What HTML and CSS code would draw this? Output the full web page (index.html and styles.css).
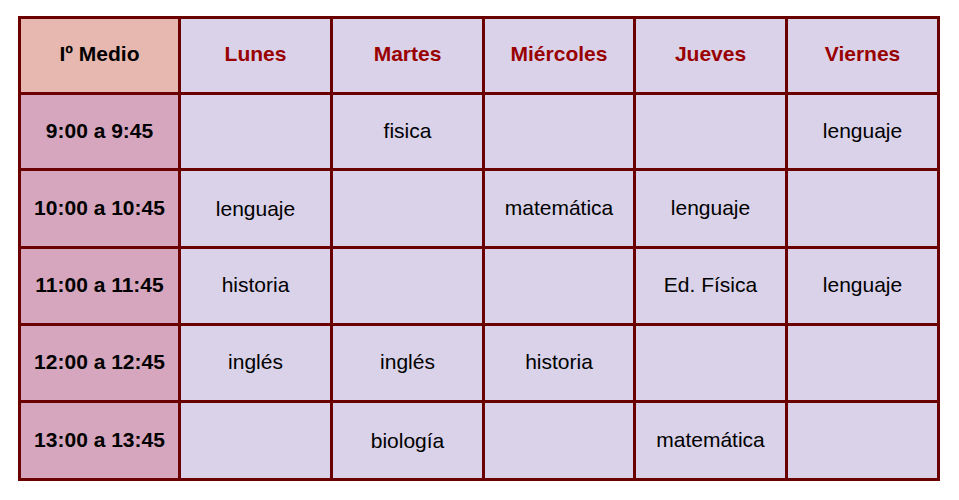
FILE: index.html
```html
<!DOCTYPE html>
<html lang="es">
<head>
<meta charset="utf-8">
<title>Horario Iº Medio</title>
<link rel="stylesheet" href="styles.css">
</head>
<body>
<div class="schedule">
  <div class="cell corner">Iº Medio</div>
  <div class="cell day">Lunes</div>
  <div class="cell day">Martes</div>
  <div class="cell day">Miércoles</div>
  <div class="cell day">Jueves</div>
  <div class="cell day">Viernes</div>

  <div class="cell time">9:00 a 9:45</div>
  <div class="cell"></div>
  <div class="cell">fisica</div>
  <div class="cell"></div>
  <div class="cell"></div>
  <div class="cell">lenguaje</div>

  <div class="cell time">10:00 a 10:45</div>
  <div class="cell low">lenguaje</div>
  <div class="cell"></div>
  <div class="cell">matemática</div>
  <div class="cell">lenguaje</div>
  <div class="cell"></div>

  <div class="cell time">11:00 a 11:45</div>
  <div class="cell">historia</div>
  <div class="cell"></div>
  <div class="cell"></div>
  <div class="cell">Ed. Física</div>
  <div class="cell">lenguaje</div>

  <div class="cell time">12:00 a 12:45</div>
  <div class="cell">inglés</div>
  <div class="cell">inglés</div>
  <div class="cell">historia</div>
  <div class="cell"></div>
  <div class="cell"></div>

  <div class="cell time">13:00 a 13:45</div>
  <div class="cell"></div>
  <div class="cell low">biología</div>
  <div class="cell"></div>
  <div class="cell">matemática</div>
  <div class="cell"></div>
</div>
</body>
</html>
```

FILE: styles.css
```css
html, body {
  margin: 0;
  padding: 0;
  background: #ffffff;
}

body {
  font-family: "Liberation Sans", Arial, sans-serif;
}

.schedule {
  margin: 16px 0 0 18px;
  width: 922px;
  box-sizing: border-box;
  padding: 3px;
  gap: 3px;
  background: #6b0000;
  display: grid;
  grid-template-columns: 157px 149px 149px 148px 149px 149px;
  grid-template-rows: 73px 73px 75px 74px 74px 75px;
}

.cell {
  background: #d9d2e9;
  color: #000000;
  font-size: 21px;
  display: flex;
  align-items: center;
  justify-content: center;
  padding-bottom: 2px;
  box-sizing: border-box;
}

.cell.low {
  padding-bottom: 1px;
  padding-top: 1px;
}

.corner {
  background: #e6b8af;
  font-weight: bold;
  padding-bottom: 3px;
}

.day {
  color: #990000;
  font-weight: bold;
  padding-bottom: 3px;
}

.time {
  background: #d5a6bd;
  font-weight: bold;
}
```
